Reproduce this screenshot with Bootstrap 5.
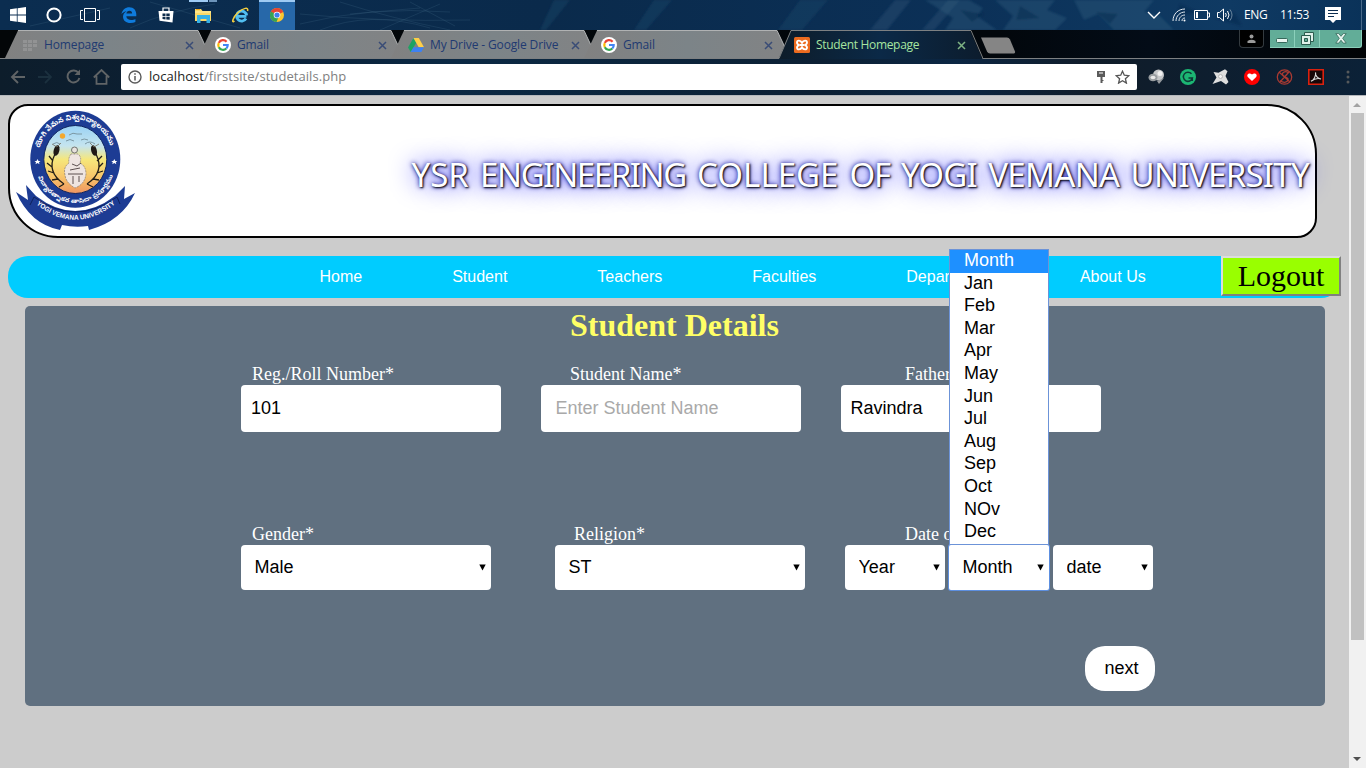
<!DOCTYPE html>
<html lang="en">
<head>
<meta charset="utf-8">
<meta name="viewport" content="width=device-width, initial-scale=1">
<title>Student Homepage</title>
<link href="https://cdn.jsdelivr.net/npm/bootstrap@5.3.0/dist/css/bootstrap.min.css" rel="stylesheet">
<style>
  html, body { height: 100%; overflow: hidden; }
  body { font-family: "Liberation Sans", Arial, sans-serif; background: #ccc; color: #000; line-height: 1.2; }
  svg { display: block; flex: none; }
  .ui { font-family: "Open Sans", "Noto Sans", sans-serif; }

  /* desktop taskbar */
  .taskbar { height: 30px; position: relative; background: linear-gradient(90deg, #0b2d50, #0a2a4b 40%, #0b3057 70%, #0f3a63 90%, #0a3259); color: #fff; }
  .wallpaper { position: absolute; inset: 0; }
  .task { height: 30px; width: 37px; position: relative; }
  .task-current { background: #2768a9; box-shadow: inset 0 2px #9fcbf3; }
  .tray { font-size: 12px; letter-spacing: -.3px; position: relative; padding-right: 3px; }

  /* browser */
  .tabstrip { height: 29px; background: linear-gradient(90deg, #030608 0, #02070c 1000px, #030c17 1150px, #010305); position: relative; border-bottom: 1px solid #7d8082; }
  .tab { width: 206px; margin-right: -13px; height: 28px; position: relative; padding: 2px 13px 0 17px; font-size: 12px; color: #213a71; }
  .tab .shape { position: absolute; left: 0; top: 0; }
  .tab .caption { position: relative; margin-left: 6px; flex: 1; white-space: nowrap; letter-spacing: -.13px; }
  .tab svg { position: relative; }
  .tab-active { color: #a6e5a0; height: 29px; z-index: 2; padding-bottom: 1px; }
  .tab-active .caption { letter-spacing: -.32px; }
  .account { width: 25px; height: 18px; border: 1px solid #343b40; border-top: 0; border-radius: 0 0 4px 4px; background: #000; margin-right: 6px; }
  .wbtn { height: 18px; background: #62ad98; border: 1px solid #8bd0bb; border-width: 0 1px 1px 0; }
  .toolbar { height: 37px; background: linear-gradient(90deg, #0d1d2b, #0b2138 20%, #0b2944 33%, #0c2034 60%, #0b2643 70%, #101c29 80%, #0b2137); border-bottom: 1px solid #b5b8bc; padding-bottom: 1px; }
  .omnibox { width: 1016px; height: 26px; background: #fff; border-radius: 2px; font-size: 13px; letter-spacing: .06px; padding: 0 7px; }
  .ext { width: 32px; }

  /* web page */
  .site { position: relative; overflow: hidden; padding: 8px 0 0 8px; background: #ccc; }
  .masthead { width: 1309px; height: 134px; border: 2px solid #000; border-radius: 20px 50px; background: #fff; padding-right: 6px; }
  .college { font-family: "Noto Sans", "Open Sans", sans-serif; font-size: 33px; line-height: 40px; color: #fff; white-space: nowrap; word-spacing: 2.6px; text-shadow: 1px 1px 2px #000, 0 0 25px #00f, 0 0 5px #00008b; }
  .tight { letter-spacing: -1.4px; }
  .snug { letter-spacing: -.7px; }
  .sitenav { width: 1333px; height: 42px; margin-top: 18px; background: #0cf; border-radius: 20px; padding-left: 311.500px; color: #fff; font-size: 16px; }
  .sitenav .nav-link { color: #fff; padding: 0; margin-right: 90px; }
  .logout { width: 120px; height: 40px; border: 2px solid; background: #9f0; font: 30px/36px "Liberation Serif", serif; color: #000; padding: 0; margin-left: auto; align-self: flex-start; border-color: #dcdcdc #808080 #808080 #dcdcdc; border-radius: 0; }
  .details { width: 1300px; height: 400px; margin: 8px 0 0 17px; background: #607080; border-radius: 5px; padding-left: 216px; }
  .details h1 { font: bold 32px/38px "Liberation Serif", serif; color: #ff6; margin: 0 0 0 -217px; text-align: center; }
  .details label { font: 18px/21px "Liberation Serif", serif; color: #fff; display: block; white-space: nowrap; }
  .fields { margin-top: 20px; gap: 40px; }
  .fields .form-control { width: 260px; height: 47px; border: 0; border-radius: 4px; font-size: 18px; padding: 0 10px; color: #000; }
  .fields .form-control::placeholder { color: #a9a9a9; }
  .selects { margin-top: 92px; }
  .form-select { height: 45px; border: 0; border-radius: 4px; font-size: 18px; color: #000; padding: 0 13.500px 1px; position: relative;
    background: #fff url("data:image/svg+xml,%3Csvg xmlns='http://www.w3.org/2000/svg' width='7' height='7'%3E%3Cpath d='M.3.5h6.4L3.5 6.5z'/%3E%3C/svg%3E") no-repeat right 5.500px top 19px / 7px 7px; }
  .wide { width: 250px; }
  .narrow { width: 100px; }
  .picked { box-shadow: 0 0 0 1px #5d8fe0; border-radius: 2px; }
  .months { position: absolute; left: 0; bottom: 45px; width: 100px; height: 296px; background: #fff; border: 1px solid #6c93d8; z-index: 5; font-size: 18px; line-height: 22.58px; margin: 0; }
  .months li { padding-left: 14px; height: 22.58px; position: relative; top: -.85px; }
  .months li:first-child { background: #1e90ff; color: #fff; top: 0; height: 23px; line-height: 21px; margin-bottom: -.42px; }
  .next { width: 70px; height: 45px; border: 0; border-radius: 20px; background: #fff; font-size: 18px; margin: 56px 0 0 844px; padding: 0 0 0 3px; display: block; color: #000; }
  .scroll { width: 17px; background: #f1f1f1; }
  .thumb { width: 13px; height: 527px; background: #c1c1c1; }
</style>
</head>
<body class="d-flex flex-column">

<svg width="0" height="0" class="position-absolute">
  <defs>
    <symbol id="google" viewBox="0 0 16 16"><circle cx="8" cy="8" r="8" fill="#fff"/><g fill="none" stroke-width="2.2"><path d="M11.6 4.7A4.7 4.7 0 0 0 3.8 5.9" stroke="#ea4335"/><path d="M3.8 5.9a4.7 4.7 0 0 0 0 4.3" stroke="#fbbc05"/><path d="M3.8 10.2a4.7 4.7 0 0 0 7.5 1.3" stroke="#34a853"/><path d="M11.3 11.5a4.7 4.7 0 0 0 1.4-3.5H8" stroke="#4285f4"/></g></symbol>
    <symbol id="cross" viewBox="0 0 9 9"><path d="M1 1l7 7M8 1L1 8" stroke="currentColor" stroke-width="1.5" stroke-opacity=".75"/></symbol>
    <symbol id="tabshape" viewBox="0 0 206 28"><path d="M0 28L13 .5h180L206 28z" fill="url(#tabfill)"/><path d="M13 .5h180L206 28" fill="none" stroke="#b0b2b3"/></symbol>
    <linearGradient id="tabfill"><stop offset="0" stop-color="#818181"/><stop offset=".5" stop-color="#7c8488"/><stop offset="1" stop-color="#828384"/></linearGradient>
    <linearGradient id="activefill"><stop offset="0" stop-color="#0d1c29"/><stop offset=".5" stop-color="#0b2947"/><stop offset="1" stop-color="#0c1c2d"/></linearGradient>
    <filter id="soft"><feGaussianBlur stdDeviation="1.300"/></filter>
  </defs>
</svg>

<header class="taskbar d-flex align-items-center ui">
  <svg class="wallpaper" width="1366" height="30">
    <g stroke="#3d6680" stroke-opacity=".28" fill="none">
      <path d="M300 24Q370 6 450 12M320 30Q370 10 430 28M340 2Q390 18 450 30M380 30L440 4M300 14Q380 22 470 20M410 2L455 26M130 28Q170 10 215 4M30 26L110 8M150 2L240 28M350 14L420 8"/>
    </g>
    <g filter="url(#soft)">
    <path d="M540 30l14-30h16l-24 30zM634 30l20-30h18l-26 30zM800 0h28l-26 30h-24z" fill="#1d4468" opacity=".45"/>
    <path d="M870 30L895 0h16l-24 30zM922 30L948 0h12l-26 30z" fill="#2f5578" opacity=".4"/>
    <path d="M925 0h44l14 8-6 8 20 14h-52l8-12zM995 0h60l-8 10 20 8-12 12h-52l10-14zM1074 0h80l-10 12 16 4 14 14h-60l-16-16-14 6z" fill="#315e82" opacity=".38"/>
    <path d="M960 10l24 4-12 8zM1020 6l20 12-24 2zM1096 12l22 2-8 10zM1180 4l18 8-22 4zM1214 18l20-6 8 14z" fill="#08294b" opacity=".45"/>
    </g>
    <path d="M1361.500 0v30" stroke="#48698a"/>
  </svg>
  <div class="task d-flex align-items-center justify-content-center" style="width:36px"><svg width="16" height="16" fill="#fff"><path d="M0 2.300l6.800-1v6.300H0zM7.600 1.200L16 0v7.600H7.600zM0 8.400h6.800v6.300L0 13.700zM7.600 8.400H16V16l-8.400-1.200z"/></svg></div>
  <div class="task d-flex align-items-center justify-content-center" style="width:36px"><svg width="16" height="16"><circle cx="8" cy="8" r="6.600" fill="none" stroke="#fff" stroke-width="2"/></svg></div>
  <div class="task d-flex align-items-center justify-content-center" style="width:38px"><svg width="20" height="14" fill="none" stroke="#fff" style="margin-right:2px"><path d="M4.500.5h11v13h-11zM3 2.500H.5v9H3M17 2.500h2.500v9H17"/></svg></div>
  <div class="task d-flex align-items-center justify-content-center"><svg width="16" height="16"><path d="M.5 7.200C1.200 2.500 4.500.2 8.300.2c4.600 0 7 3.200 7 7.300v1.800H5.300c.2 2.600 2.400 3.700 4.900 3.700 1.700 0 3.100-.5 4.200-1.100v3c-1.400.7-3.100 1.100-5 1.100-4.300 0-7.400-2.500-7.400-6.300 0-2.600 1.400-4.500 3.600-5.500C3.400 4.400 1.700 5.400.5 7.200zM5.400 6.500h5.700c0-1.700-.8-2.700-2.600-2.700S5.700 4.800 5.400 6.500z" fill="#0f7bdc"/></svg></div>
  <div class="task d-flex align-items-center justify-content-center"><svg width="16" height="16"><path d="M.5 4h15l-1 11.500-13-1.700z" fill="#fff"/><path d="M5 5V1h6v4" fill="none" stroke="#fff" stroke-width="1.200"/><path d="M4.500 6.500h3V9h-3zM8.300 6.400h3.400V9H8.300zM4.500 9.800h3v2.600l-3-.3zM8.300 9.800h3.400v3l-3.400-.3z" fill="#0b2a4a"/></svg></div>
  <div class="task d-flex align-items-center justify-content-center" style="width:38px"><svg class="position-absolute top-0" style="left:5px" width="28" height="2"><path d="M0 0h19v2H0z" fill="#9fcbf3"/><path d="M20 0h8v2h-8z" fill="#6d94ba"/></svg><svg width="17" height="15"><path d="M0 1h6l1.500 2H16v10H0z" fill="#fbd968"/><path d="M1 1.500h4" stroke="#f0a61c"/><path d="M2 7h13v8h-3.500v-4h-6v4H2z" fill="#36b0e5"/><path d="M0 4h16" stroke="#fff1aa"/></svg></div>
  <div class="task d-flex align-items-center justify-content-center"><svg width="18" height="17"><path d="M14.400 9.300H5.600M14 11.500a5 5 0 1 1 .6-3" fill="none" stroke="#52bff1" stroke-width="2.800"/><path d="M2.500 14C-1 17 1 10 6 5.500S17-.5 15.500 4" fill="none" stroke="#f7cf3d" stroke-width="1.500"/></svg></div>
  <div class="task task-current d-flex align-items-center justify-content-center" style="width:36px"><svg width="14" height="14"><circle cx="7" cy="7" r="7" fill="#fbc62d"/><path d="M7 7L.8 3.800A7 7 0 0 1 13.300 4z" fill="#e64534"/><path d="M.8 3.600A7 7 0 0 0 6.500 14L9 8z" fill="#36a354"/><circle cx="7" cy="7" r="3.300" fill="#fff"/><circle cx="7" cy="7" r="2.600" fill="#3f7fe9"/></svg></div>
  <div class="tray d-flex align-items-center ms-auto">
    <svg width="14" height="8" style="margin-right:11px"><path d="M1 1l6 6 6-6" fill="none" stroke="#fff" stroke-width="1.400"/></svg>
    <svg width="14" height="14" style="margin-right:8px" fill="none" stroke="#e5ebf1"><path d="M1 13C1 6 6 1 13 1M4 13c0-5 4-9 9-9M7 13c0-3.500 2.500-6 6-6M10 13c0-2 1-3 3-3"/><circle cx="12.500" cy="12.500" r="1" fill="#fff" stroke="none"/></svg>
    <svg width="16" height="10" style="margin-right:7px"><path d="M.5.500h13v9H.5zM14 3h1.500v4H14" fill="none" stroke="#fff"/><path d="M2 2h2v6H2z" fill="#fff"/></svg>
    <svg width="17" height="14" style="margin-right:10px" fill="none" stroke="#fff"><path d="M.5 4.500h2l4-3.500v12l-4-3.500h-2zM8.500 5q1.500 2 0 4M10.500 3q3 4 0 8"/><path d="M13 1.500q4 5.500 0 11" stroke="#6b879f"/></svg>
    <span style="width:36px">ENG</span><span style="width:45px">11:53</span>
    <svg width="17" height="16" style="margin-right:21px"><path d="M0 0h16v13h-5l-3 3-3-3H0z" fill="#fff"/><path d="M3 3.500h10M3 6.500h10M3 9.500h6" stroke="#0b2d50"/></svg>
  </div>
</header>

<nav class="tabstrip d-flex ui" style="padding-left:5px">
  <div class="tab d-flex align-items-center"><svg class="shape" width="206" height="28"><use href="#tabshape"/></svg>
    <svg width="16" height="14" fill="#929394"><path d="M1 2h4v3H1zM6 2h4v3H6zM11 2h4v3h-4zM1 6h4v3H1zM6 6h4v3H6zM11 6h4v3h-4zM1 10h4v3H1zM6 10h4v3H6z"/></svg>
    <span class="caption">Homepage</span><svg width="9" height="9" class="me-1"><use href="#cross"/></svg></div>
  <div class="tab d-flex align-items-center"><svg class="shape" width="206" height="28"><use href="#tabshape"/></svg>
    <svg width="16" height="16"><use href="#google"/></svg>
    <span class="caption">Gmail</span><svg width="9" height="9" class="me-1"><use href="#cross"/></svg></div>
  <div class="tab d-flex align-items-center"><svg class="shape" width="206" height="28"><use href="#tabshape"/></svg>
    <svg width="16" height="14"><path d="M5.500 0L0 9.500 2.700 14 8.300 4.700z" fill="#1ea362"/><path d="M5.500 0h5.300L16 9.200h-5.300z" fill="#ffcf48"/><path d="M5.500 9.300H16L13.300 14H2.700z" fill="#3d81f2"/></svg>
    <span class="caption">My Drive - Google Drive</span><svg width="9" height="9" class="me-1"><use href="#cross"/></svg></div>
  <div class="tab d-flex align-items-center"><svg class="shape" width="206" height="28"><use href="#tabshape"/></svg>
    <svg width="16" height="16"><use href="#google"/></svg>
    <span class="caption">Gmail</span><svg width="9" height="9" class="me-1"><use href="#cross"/></svg></div>
  <div class="tab tab-active d-flex align-items-center"><svg class="shape" width="206" height="29"><path d="M0 29l2-1L14 .500h179L205 28l1 1z" fill="url(#activefill)"/><path d="M0 28.500h2L14 .500h180L206 28.500" fill="none" stroke="#7d8082"/></svg>
    <svg width="16" height="16"><rect width="16" height="16" rx="1.500" fill="#ec6b1f"/><path d="M8 5.800C6.500 3 3 3 3 5.400 3 7 4.500 8 5.800 8 4.500 8 3 9 3 10.600 3 13 6.500 13 8 10.200 9.500 13 13 13 13 10.600 13 9 11.500 8 10.200 8 11.500 8 13 7 13 5.400 13 3 9.500 3 8 5.800zM6 8h4" fill="none" stroke="#fff" stroke-width="1.900"/></svg>
    <span class="caption">Student Homepage</span><svg width="9" height="9" class="me-1"><use href="#cross"/></svg></div>
  <svg width="36" height="17" style="margin:7px 0 0 10px"><path d="M0 .500h26q2 0 3 2l5 12q.5 2-2 2H9q-2 0-3-2z" transform="translate(1)" fill="#858585"/></svg>
  <div class="d-flex ms-auto" style="padding-right:4px">
    <div class="account d-flex justify-content-center align-items-center"><svg width="9" height="9" fill="#9a9a9a"><circle cx="4.500" cy="2.500" r="2"/><path d="M.5 9V7q4-2.500 8 0v2z"/></svg></div>
    <div class="wbtn d-flex justify-content-center align-items-center" style="width:25px"><svg width="12" height="5" style="margin-top:4px"><rect x=".5" y=".500" width="11" height="4" rx="1" fill="#e8f5f0" stroke="#35695b"/></svg></div>
    <div class="wbtn d-flex justify-content-center align-items-center" style="width:25px"><svg width="13" height="13"><path d="M3.500.500h9v9h-9z" fill="#dff1ea" stroke="#2b5c4e"/><path d="M.5 3.500h9v9h-9z" fill="#dff1ea" stroke="#2b5c4e"/><path d="M3.500 6.500h3v3h-3z" fill="#62ad98" stroke="#2b5c4e"/></svg></div>
    <div class="wbtn d-flex justify-content-center align-items-center" style="width:42px;border-radius:0 0 3px 0"><svg width="12" height="11"><path d="M.8.600h3L6 3.300 8.200.600h3L7.700 5.300l3.500 4.800h-3L6 7.200 3.800 10.100h-3L4.300 5.300z" fill="#e8f5f0" stroke="#35695b" stroke-width=".8"/></svg></div>
  </div>
</nav>

<div class="toolbar d-flex align-items-center ui">
  <div class="d-flex align-items-center" style="width:121px;padding-left:10px;gap:13px">
    <svg width="15" height="14" fill="none" stroke="#606466" stroke-width="1.900"><path d="M8 1L2 7l6 6M2 7h13"/></svg>
    <svg width="14" height="14" fill="none" stroke="#1b303e" stroke-width="1.900"><path d="M7 1l6 6-6 6M13 7H0"/></svg>
    <svg width="15" height="15" fill="none" stroke="#606466" stroke-width="1.900" style="margin-left:1px"><path d="M12.500 4A6 6 0 1 0 13.400 9"/><path d="M14 .500V6H8.500z" fill="#606466" stroke="none"/></svg>
    <svg width="17" height="16" fill="none" stroke="#606466" stroke-width="1.800" style="margin-left:-1px"><path d="M.8 8.500L8.500 1l7.700 7.500M3.500 7v7.800h10V7"/></svg>
  </div>
  <div class="omnibox d-flex align-items-center">
    <svg width="14" height="14"><circle cx="7" cy="7" r="6" fill="none" stroke="#5a5a5a" stroke-width="1.400"/><path d="M7 6v4.500M7 3.300v1.500" stroke="#5a5a5a" stroke-width="1.500"/></svg>
    <span class="flex-fill" style="margin-left:7px;color:#808080"><span style="color:#222">localhost</span>/firstsite/studetails.php</span>
    <svg width="8" height="12" style="margin-right:10px"><path d="M0 0h8v6H5.500v6h-2V6H0z" fill="#5a5a5a"/><path d="M2 2h4" stroke="#fff"/><path d="M5 9.500h1.500" stroke="#5a5a5a"/></svg>
    <svg width="15" height="14" fill="none" stroke="#555" stroke-width="1.300"><path d="M7.500 1.200l1.800 4 4.500.5-3.400 3 1 4.400-3.900-2.300-3.900 2.300 1-4.400-3.400-3 4.500-.5z"/></svg>
  </div>
  <div class="d-flex align-items-center" style="margin-left:3px">
    <div class="ext d-flex justify-content-center"><svg width="17" height="15"><circle cx="10.500" cy="6" r="5.500" fill="#c4c6c8"/><circle cx="12" cy="4.500" r="2.500" fill="#f1f1f1"/><path d="M9 12l7-3-5 6z" fill="#969a9e"/><ellipse cx="5" cy="8.500" rx="4.500" ry="3.800" fill="#989da0"/><ellipse cx="5" cy="8.500" rx="2.500" ry="1.800" fill="#e8e8e8"/></svg></div>
    <div class="ext d-flex justify-content-center"><svg width="16" height="16"><circle cx="8" cy="8" r="8" fill="#1cb673"/><path d="M11.500 4.800A4.600 4.600 0 1 0 12.400 9H8.500M12.300 8.500v3.500" fill="none" stroke="#0d3a36" stroke-width="1.500"/></svg></div>
    <div class="ext d-flex justify-content-center"><svg width="17" height="16"><path d="M1.500 3l5 .8L13 .300l2.500 2-2 4.700 3 6-2.500 2.500-5-3.500-8.500 3 4-6.500z" fill="#dedede"/><circle cx="8.500" cy="7.500" r="2" fill="#f4f4f4" stroke="#b7b7b7"/></svg></div>
    <div class="ext d-flex justify-content-center"><svg width="16" height="16"><circle cx="8" cy="8" r="8" fill="#f00"/><path d="M8 12L3.800 8C2 5.500 5.500 3 8 5.600 10.500 3 14 5.500 12.200 8z" fill="#fff"/></svg></div>
    <div class="ext d-flex justify-content-center"><svg width="17" height="16" fill="none" stroke="#a93a32" stroke-width="1.300"><circle cx="8.500" cy="8" r="7.200"/><path d="M3 3l11 10M12 3.500C9 1.500 5 4 7 6.500s6 1.500 5 4.500-5 3-8 .5M13 3L4 13"/></svg></div>
    <div class="ext d-flex justify-content-center"><svg width="16" height="16"><path d="M.8.800h14.400v14.400H.8z" fill="#180708" stroke="#da210e" stroke-width="1.600"/><path d="M3 12.300C6 11 8 7 7.600 3.500 7 6 9.500 9.800 13 10c-3-1-7 0-10 2.300z" fill="none" stroke="#ddd" stroke-width="1.100"/></svg></div>
    <div class="ext d-flex justify-content-center"><svg width="4" height="14" fill="#56595b"><circle cx="2" cy="2" r="1.500"/><circle cx="2" cy="7" r="1.500"/><circle cx="2" cy="12" r="1.500"/></svg></div>
  </div>
</div>

<div class="d-flex flex-fill" style="min-height:0">
<main class="site flex-fill">
  <section class="masthead d-flex align-items-center">
    <svg width="130" height="130" viewBox="0 0 130 130">
      <defs>
        <linearGradient id="sky" x2="0" y2="1"><stop offset="0" stop-color="#9ad2f5"/><stop offset=".3" stop-color="#c5e4ee"/><stop offset=".5" stop-color="#f6e77b"/><stop offset=".75" stop-color="#f8c66a"/><stop offset="1" stop-color="#ef9561"/></linearGradient>
        <path id="arcTop" d="M28.300 53A37 39.500 0 0 1 102.300 53"/>
        <path id="arcLow" d="M25.300 55A40 42 0 0 0 105.300 55"/>
        <path id="arcRibbon" d="M23 95.500Q65 132 108 95.500"/>
      </defs>
      <ellipse cx="65.300" cy="53.300" rx="45" ry="48.500" fill="#1d3c94"/>
      <ellipse cx="65.300" cy="53.500" rx="31.500" ry="34" fill="url(#sky)" stroke="#10245f"/>
      <circle cx="52.500" cy="30" r="2.700" fill="#f4a82c"/>
      <path d="M59 29q4-3 8-1h5M56 35q4-3 8 0M71 34q3-2 7 0M75 38q5-4 10 0M43 38q4-3 7 0" fill="none" stroke="#7c98a4"/>
      <g fill="none" stroke="#231e17" stroke-width="1.300">
        <path d="M45 48Q36 66 54 78M86 48Q95 66 77 78M43 55l-4-5M42 61l-5-4M44 67l-6-2M48 73l-6 1M87 55l5-5M89 61l4-4M87 67l6-2M83 73l6 1M54 78l-5 3M77 78l6 3"/>
      </g>
      <ellipse cx="46.500" cy="44.500" rx="2.800" ry="5.500" fill="#201a16" transform="rotate(15 46.500 44.500)"/><ellipse cx="84" cy="44.500" rx="2.800" ry="5.500" fill="#201a16" transform="rotate(-15 84 44.500)"/>
      <path d="M42 38l5 3 4-4M80 37l4 4 5-3" fill="none" stroke="#766f5d" stroke-width=".8"/>
      <circle cx="64.500" cy="44" r="3" fill="#e7e2dd" stroke="#555" stroke-width=".8"/>
      <path d="M61 48q-3 4-2 9-6 4-4 12 1 8 10 13 10-4 11-14 0-8-6-11 2-6-2-9z" fill="#eee5e1" stroke="#857a75" stroke-width=".7" stroke-dasharray="2 1"/>
      <path d="M58 68h15M63 70v8M69 70v6M62 58l5 2 4-3M60 64l10-2" stroke="#4c4040" stroke-width=".9" fill="none"/>
      <path d="M27.500 53l1 2h2l-1.500 1.300.5 2-2-1.200-2 1.200.5-2-1.500-1.300h2zM104.300 53l1 2h2l-1.500 1.300.5 2-2-1.200-2 1.200.5-2-1.500-1.300h2z" fill="#fff"/>
      <path d="M6 86l12 8-2-15 10 11Q65 120 105 90l10-10-1 13 11-6Q112 115 79 124l-1-4q-13 2-26-1l-2 5Q20 118 6 86z" fill="#1d3c94"/>
      <path d="M20 99l4-8Q65 121 107 91l3 7" fill="none" stroke="#0c1d55" stroke-width=".9"/>
      <g fill="#fff" font-family="'Noto Sans Telugu','Noto Sans',sans-serif" font-weight="700">
        <text font-size="7.500"><textPath href="#arcTop" startOffset="11" textLength="96" lengthAdjust="spacingAndGlyphs">యోగి వేమన విశ్వవిద్యాలయము</textPath></text>
        <text font-size="6"><textPath href="#arcLow" startOffset="16" textLength="98" lengthAdjust="spacingAndGlyphs">విద్యారత్నాకర తాసిదా ప్రపూర్ణము</textPath></text>
      </g>
      <text font-family="Liberation Sans, sans-serif" font-weight="700" font-size="6.800" fill="#fff"><textPath href="#arcRibbon" startOffset="4" textLength="87" lengthAdjust="spacingAndGlyphs">YOGI VEMANA UNIVERSITY</textPath></text>
    </svg>
    <div class="college ms-auto" style="margin-top:8px">YSR <span class="tight">ENGINEERING</span> COLLEGE <span class="tight">OF</span> <span class="snug">YOGI</span> <span class="snug">VEMANA</span> <span class="snug">UNIVERSITY</span></div>
  </section>

  <nav class="sitenav d-flex align-items-center">
    <a class="nav-link">Home</a><a class="nav-link">Student</a><a class="nav-link">Teachers</a><a class="nav-link">Faculties</a><a class="nav-link">Department</a><a class="nav-link me-0">About Us</a>
    <button class="logout">Logout</button>
  </nav>

  <form class="details">
    <h1>Student Details</h1>
    <div class="fields d-flex">
      <div><label style="padding-left:11px">Reg./Roll Number*</label><input class="form-control" value="101"></div>
      <div><label style="padding-left:29px">Student Name*</label><input class="form-control" placeholder="Enter Student Name" style="padding-left:14.500px"></div>
      <div><label style="padding-left:64px">Father Name*</label><input class="form-control" value="Ravindra" style="padding-left:9.500px"></div>
    </div>
    <div class="selects d-flex">
      <div><label style="padding-left:11px">Gender*</label><select class="form-select wide"><option>Male</option></select></div>
      <div style="margin-left:64px"><label style="padding-left:19px">Religion*</label><select class="form-select wide"><option>ST</option></select></div>
      <div style="margin-left:40px"><label style="padding-left:60px">Date of Birth*</label>
        <div class="d-flex gap-1">
          <select class="form-select narrow"><option>Year</option></select>
          <div class="position-relative"><select class="form-select narrow picked"><option>Month</option></select>
            <ul class="months list-unstyled"><li>Month</li><li>Jan</li><li>Feb</li><li>Mar</li><li>Apr</li><li>May</li><li>Jun</li><li>Jul</li><li>Aug</li><li>Sep</li><li>Oct</li><li>NOv</li><li>Dec</li></ul>
          </div>
          <select class="form-select narrow"><option>date</option></select>
        </div>
      </div>
    </div>
    <button type="button" class="next">next</button>
  </form>
</main>
<aside class="scroll d-flex flex-column align-items-center justify-content-between">
  <svg width="17" height="17"><path d="M4 11h8L8 7z" fill="#a3a3a3"/></svg>
  <div class="thumb mb-auto"></div>
  <svg width="17" height="17"><path d="M4 6h8L8 10z" fill="#505050"/></svg>
</aside>
</div>
<script src="https://cdn.jsdelivr.net/npm/bootstrap@5.3.0/dist/js/bootstrap.bundle.min.js"></script>
</body>
</html>
